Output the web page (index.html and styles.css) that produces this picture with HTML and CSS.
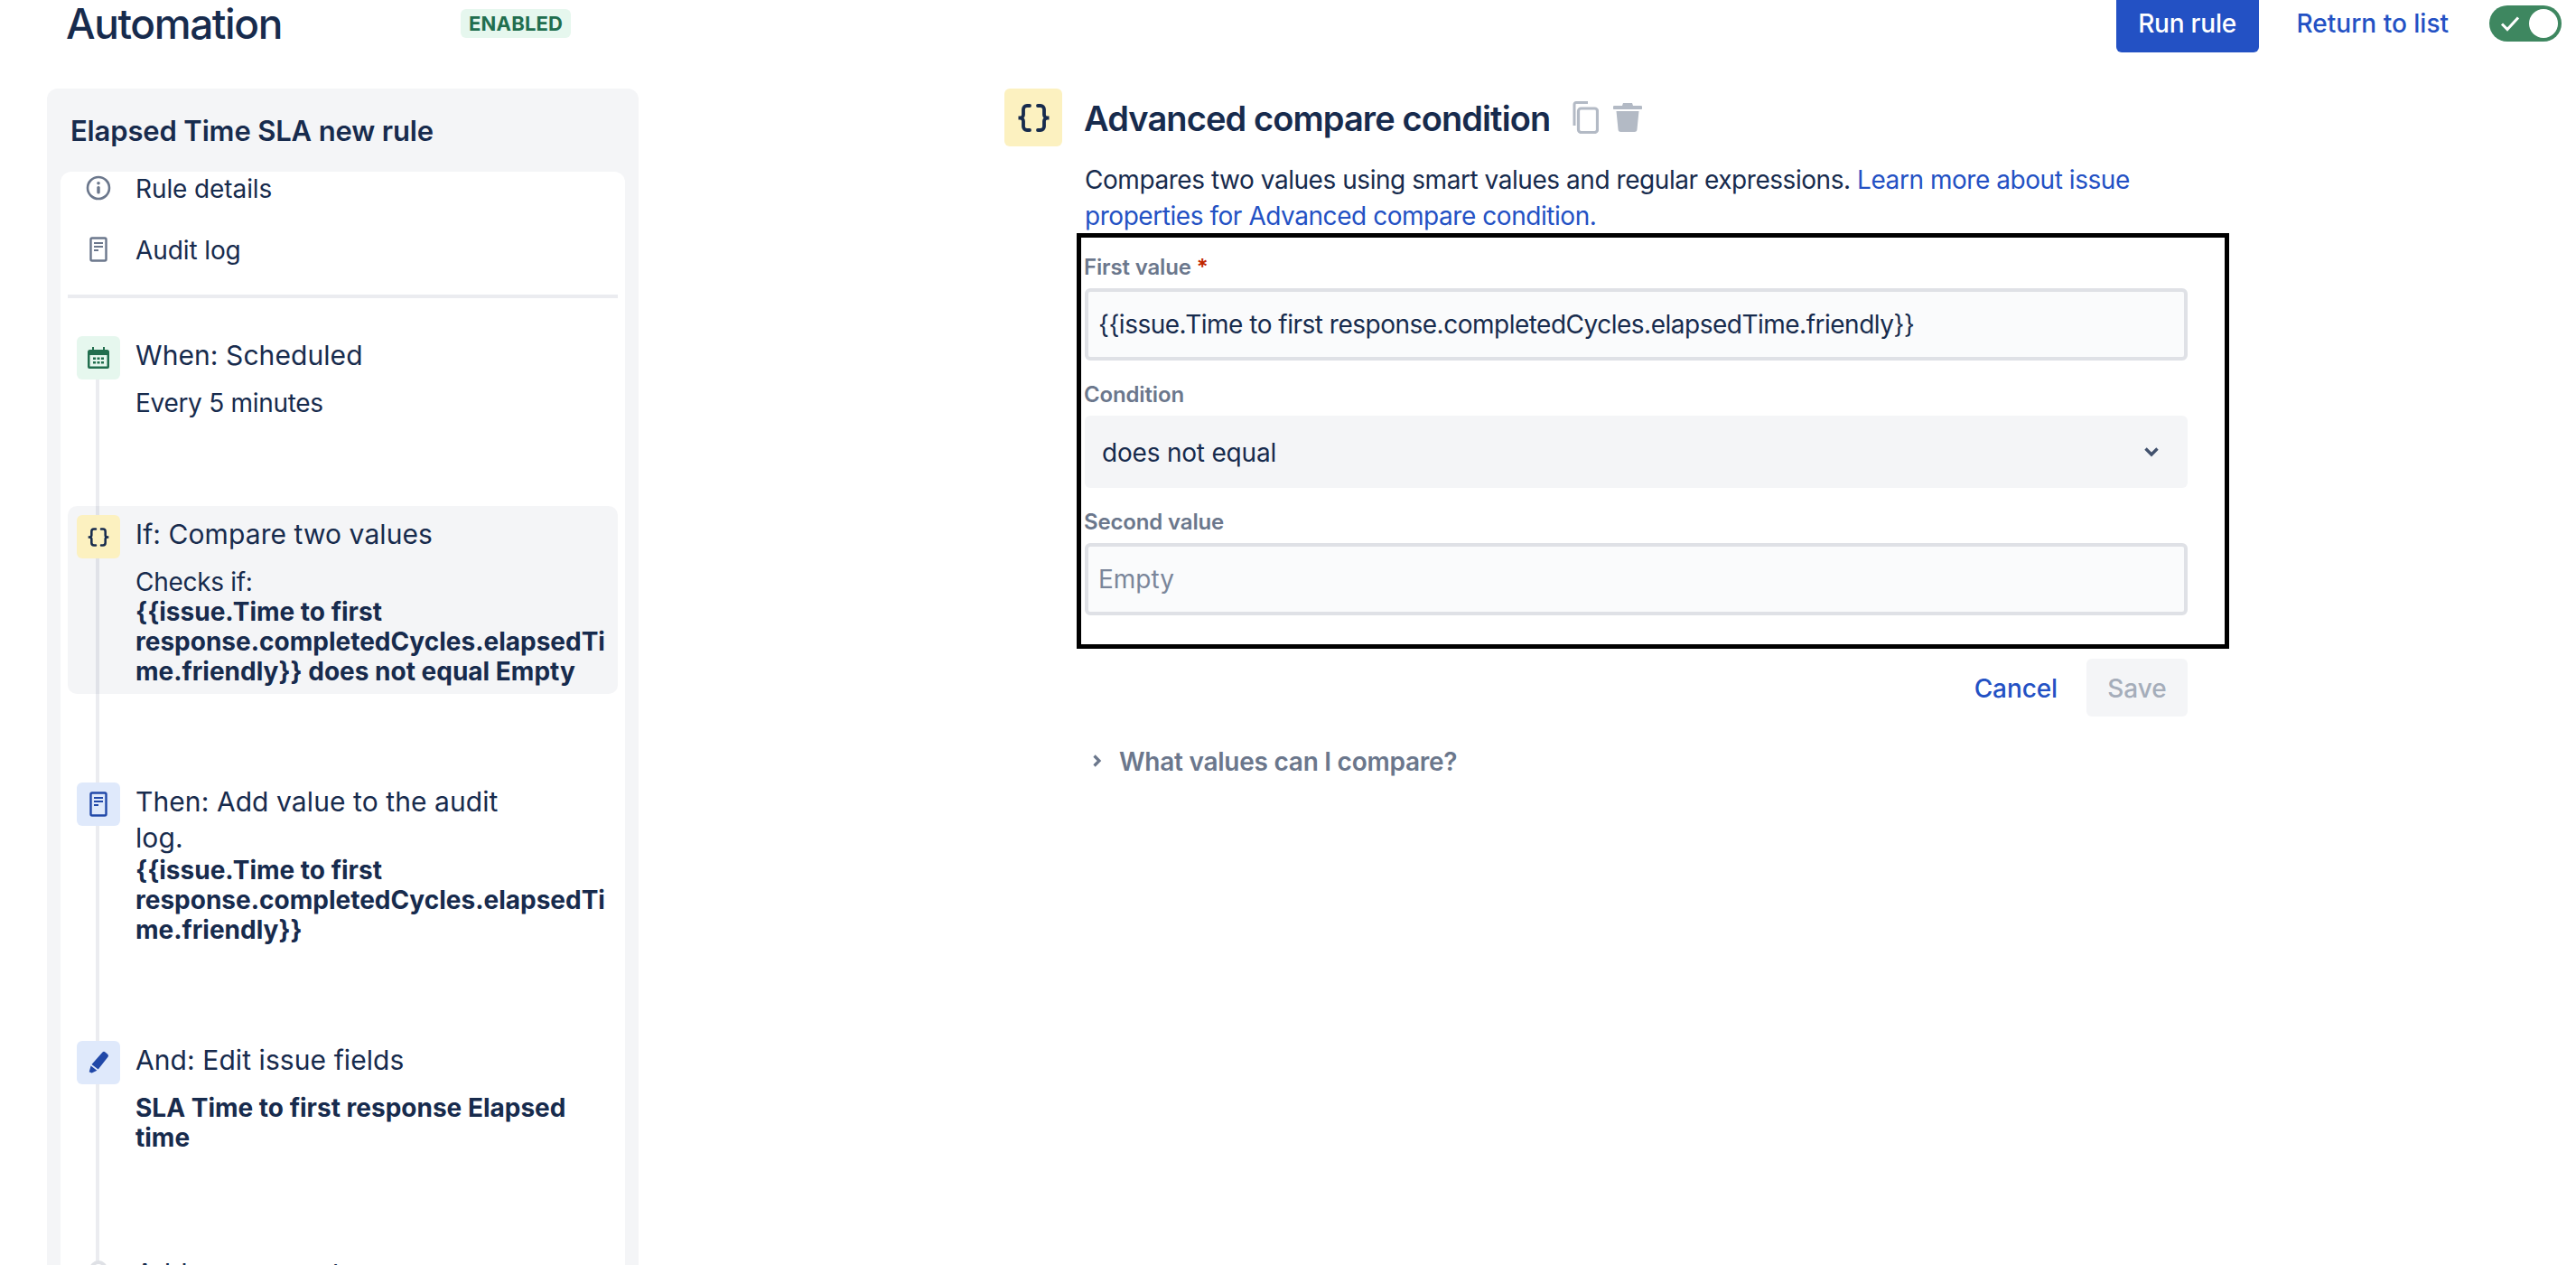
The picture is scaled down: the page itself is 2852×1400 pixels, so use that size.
FILE: index.html
```html
<!DOCTYPE html>
<html lang="en">
<head>
<meta charset="utf-8">
<title>Automation</title>
<link rel="stylesheet" href="styles.css">
</head>
<body>
<svg class="defs" width="0" height="0" aria-hidden="true">
  <defs>
    <symbol id="braces" viewBox="0 0 39 31">
      <path d="M15 2h-3a4 4 0 0 0-4 4v6a3.500 3.500 0 0 1-3.500 3.500H2.500h2a3.500 3.500 0 0 1 3.500 3.500v6a4 4 0 0 0 4 4h3M24 2h3a4 4 0 0 1 4 4v6a3.500 3.500 0 0 0 3.500 3.500h2h-2a3.500 3.500 0 0 0-3.500 3.500v6a4 4 0 0 1-4 4h-3" fill="none" stroke="currentColor" stroke-width="3.800" stroke-linecap="round"/>
    </symbol>
    <symbol id="doc" viewBox="0 0 20 28">
      <rect x="1.500" y="1.500" width="17" height="25" rx="1.500" fill="none" stroke="currentColor" stroke-width="2.400"/>
      <path d="M5 6h10v2H5zM5 10h10v2H5zM5 14h5v2H5z" fill="currentColor"/>
    </symbol>
  </defs>
</svg>
<header class="topbar">
  <h1 class="page-title">Automation</h1>
  <span class="badge">ENABLED</span>
  <button class="btn-primary">Run rule</button>
  <a class="return-link">Return to list</a>
  <span class="toggle">
    <svg class="toggle-check" viewBox="0 0 22 18" width="22" height="18"><path d="M2 9.500l6 6L20 2.500" fill="none" stroke="#fff" stroke-width="3"/></svg>
    <span class="toggle-knob"></span>
  </span>
</header>
<main class="layout">
  <aside class="panel">
    <h2 class="panel-title">Elapsed Time SLA new rule</h2>
    <div class="card">
      <div class="nav-row">
        <span class="nav-icon">
          <svg viewBox="0 0 28 28" width="28" height="28"><circle cx="14" cy="14" r="12" fill="none" stroke="#6B778C" stroke-width="2.600"/><circle cx="14" cy="8.800" r="1.800" fill="#6B778C"/><rect x="12.300" y="12" width="3.400" height="8.500" rx="1.500" fill="#6B778C"/></svg>
        </span>
        <span class="nav-label">Rule details</span>
      </div>
      <div class="nav-row">
        <span class="nav-icon nav-doc"><svg width="20" height="28"><use href="#doc"/></svg></span>
        <span class="nav-label">Audit log</span>
      </div>
      <div class="divider"></div>
      <div class="timeline">
        <section class="step">
          <span class="step-icon icon-green">
            <svg viewBox="0 0 26 26" width="26" height="26"><path fill="#216E4E" fill-rule="evenodd" d="M6 1h2v3h10V1h2v3h2.500A2.500 2.500 0 0 1 25 6.500V23a2 2 0 0 1-2 2H3a2 2 0 0 1-2-2V6.500A2.500 2.500 0 0 1 3.500 4H6zM3.500 10v12.500h19V10zM7 12.500h3v2.500H7zm4.500 0h3v2.500h-3zm4.500 0h3v2.500h-3zM7 17h3v2.500H7zm4.500 0h3v2.500h-3zm4.500 0h3v2.500h-3z"/></svg>
          </span>
          <div class="step-body">
            <div class="step-title">When: Scheduled</div>
            <div class="step-sub">Every 5 minutes</div>
          </div>
        </section>
        <section class="step step-active">
          <span class="step-icon icon-yellow"><svg width="26" height="21"><use href="#braces"/></svg></span>
          <div class="step-body">
            <div class="step-title">If: Compare two values</div>
            <div class="step-sub">Checks if:<br><strong>{{issue.Time to first response.completedCycles.elapsedTime.friendly}} does not equal Empty</strong></div>
          </div>
        </section>
        <section class="step">
          <span class="step-icon icon-blue"><svg width="20" height="28"><use href="#doc"/></svg></span>
          <div class="step-body">
            <div class="step-title">Then: Add value to the audit log.</div>
            <div class="step-sub step-sub-tight"><strong>{{issue.Time to first response.completedCycles.elapsedTime.friendly}}</strong></div>
          </div>
        </section>
        <section class="step">
          <span class="step-icon icon-blue">
            <svg viewBox="0 0 26 26" width="26" height="26"><path fill="#2148A8" d="M17.500 1.500a2.200 2.200 0 0 1 3 0l2.700 2.300a2.200 2.200 0 0 1 .3 3L12.700 20.500 5.500 15zM4.600 16.500l6.800 5.200-5.800 2.800-2.900-1.200z"/></svg>
          </span>
          <div class="step-body">
            <div class="step-title">And: Edit issue fields</div>
            <div class="step-sub"><strong>SLA Time to first response Elapsed time</strong></div>
          </div>
        </section>
        <section class="step step-add">
          <span class="add-ring"></span>
          <div class="step-title">Add component</div>
        </section>
      </div>
    </div>
  </aside>
  <section class="editor">
    <div class="editor-head">
      <span class="editor-icon"><svg width="39" height="31"><use href="#braces"/></svg></span>
      <h2 class="editor-title">Advanced compare condition</h2>
      <svg class="head-action" viewBox="0 0 30 36" width="30" height="36"><path d="M3 27V3.500A2 2 0 0 1 5 1.500h13" fill="none" stroke="#B3BAC5" stroke-width="3"/><rect x="7.500" y="8" width="21" height="26.500" rx="3" fill="none" stroke="#B3BAC5" stroke-width="3.200"/></svg>
      <svg class="head-action" viewBox="0 0 32 32" width="32" height="32"><path fill="#B3BAC5" d="M11 0h10l1 3h8.500a1.500 1.500 0 0 1 0 4h-29a1.500 1.500 0 0 1 0-4H10zM3.500 9h25l-2 20a3 3 0 0 1-3 3h-15a3 3 0 0 1-3-3z"/></svg>
    </div>
    <p class="editor-desc">Compares two values using smart values and regular expressions. <a class="link">Learn more about issue properties for Advanced compare condition.</a></p>
    <div class="outlined">
      <div class="field">
        <div class="field-label">First value<span class="req">*</span></div>
        <div class="input input-long">{{issue.Time to first response.completedCycles.elapsedTime.friendly}}</div>
      </div>
      <div class="field">
        <div class="field-label">Condition</div>
        <div class="select">
          <span class="select-value">does not equal</span>
          <svg viewBox="0 0 18 14" width="18" height="14"><path d="M2.500 3.500L9 10l6.500-6.500" fill="none" stroke="#42526E" stroke-width="3.400"/></svg>
        </div>
      </div>
      <div class="field">
        <div class="field-label">Second value</div>
        <div class="input input-empty">Empty</div>
      </div>
    </div>
    <div class="actions">
      <a class="link cancel">Cancel</a>
      <button class="btn-save">Save</button>
    </div>
    <div class="expander">
      <svg viewBox="0 0 24 24" width="24" height="24"><path d="M9.500 6.500L15 12l-5.500 5.500" fill="none" stroke="#6B778C" stroke-width="3.200"/></svg>
      <span class="expander-label">What values can I compare?</span>
    </div>
  </section>
</main>
</body>
</html>
```
FILE: styles.css
```css
* { box-sizing: border-box; }
html, body { margin: 0; height: 1400px; overflow: hidden; background: #fff; }
body { font-family: Inter, "Noto Sans", sans-serif; font-size: 28px; line-height: 40px; color: #172B4D; }
.defs { display: block; height: 0; }

.topbar { display: flex; align-items: center; height: 52px; padding-left: 73px; padding-right: 16px; }
.page-title { margin: 0; font-size: 46px; font-weight: 500; line-height: 52px; width: 437px; letter-spacing: -1.4px; }
.badge { display: flex; align-items: center; height: 32px; padding: 0 9px; border-radius: 6px; background: #E6F7EE; color: #216E4E; font-size: 22px; font-weight: 700; letter-spacing: .2px; }
.btn-primary { margin-left: auto; width: 158px; height: 64px; border: 0; border-radius: 6px; background: #2351C4; color: #fff; font: 500 28px Inter, sans-serif; letter-spacing: -.2px; }
.return-link { margin-left: 42px; color: #2351C4; font-weight: 500; }
.toggle { display: flex; align-items: center; justify-content: space-between; margin-left: 45px; width: 80px; height: 40px; padding: 0 4px 0 12px; border-radius: 20px; background: #3E8760; }
.toggle-knob { width: 32px; height: 32px; border-radius: 50%; background: #fff; }

.layout { display: flex; align-items: flex-start; margin-top: 46px; }
.panel { width: 655px; height: 1302px; margin-left: 52px; border-radius: 12px 12px 0 0; background: #F4F5F7; padding: 0 15px; }
.panel-title { margin: 0 0 0 11px; height: 92px; font-size: 31px; font-weight: 600; line-height: 94px; letter-spacing: -.15px; }
.card { height: 1210px; overflow: hidden; border-radius: 12px 12px 0 0; background: #fff; padding: 0 8px; }

.nav-row { display: flex; align-items: center; height: 36px; margin-bottom: 32px; }
.nav-icon { display: flex; justify-content: center; width: 48px; margin: 0 16px 0 10px; }
.nav-label { padding-top: 2px; margin-left: 1px; letter-spacing: -.1px; }
.nav-doc { color: #6B778C; }
.divider { height: 4px; background: #EBECF0; }

.timeline { position: relative; padding-top: 32px; }
.timeline::before { content: ""; position: absolute; left: 31px; top: 70px; bottom: 0; width: 4px; background: #EBECF0; }
.step { position: relative; display: flex; gap: 17px; padding: 10px 10px 8px; margin-bottom: 88px; border-radius: 10px; }
.step:first-child { margin-bottom: 89px; }
.step-active { background: rgba(9, 30, 66, .045); }
.step-icon { position: relative; flex: none; display: flex; align-items: center; justify-content: center; width: 48px; height: 48px; border-radius: 6px; }
.icon-green { background: #E6F7EE; }
.icon-yellow { background: #FCF1C0; color: #172B4D; }
.icon-blue { background: #DFE9FB; color: #2148A8; }
.step-body { width: 522px; }
.step-title { max-width: 440px; margin-top: 1px; font-size: 30px; letter-spacing: .08px; }
.step-sub { margin-top: 17px; line-height: 33px; overflow-wrap: anywhere; letter-spacing: -.3px; }
.step-sub-tight { margin-top: 0; }
strong { font-weight: 700; letter-spacing: 0; }
.step-add { padding-top: 16px; margin-bottom: 0; }
.add-ring { position: relative; flex: none; width: 20px; height: 20px; margin: 7px 14px 0 14px; border: 4px solid #DFE1E6; border-radius: 50%; background: #fff; }

.editor { width: 1356px; margin-left: 405px; }
.editor-head { display: flex; align-items: center; height: 64px; }
.editor-icon { display: flex; align-items: center; justify-content: center; width: 64px; height: 64px; border-radius: 6px; background: #FCF1C0; color: #172B4D; margin-right: 24px; }
.editor-title { margin: 2px 24px 0 0; font-size: 38px; font-weight: 600; line-height: 48px; letter-spacing: -.9px; }
.head-action { margin-right: 16px; }
.editor-desc { margin: 16px 0 0 89px; width: 1221px; height: 80px; padding-top: 1px; letter-spacing: -.45px; }
.link { color: #2351C4; }
.outlined { margin-left: 80px; width: 1276px; padding: 18px 41px 32px 4px; border: 5px solid #000; }
.field + .field { margin-top: 23px; }
.field-label { margin: 0 0 8px -1px; font-size: 24px; font-weight: 600; line-height: 30px; color: #6B778C; letter-spacing: -.15px; }
.req { margin-left: 6px; color: #BF2600; }
.input { height: 80px; padding: 0 12px 0 11px; border: 4px solid #DFE1E6; border-radius: 6px; background: #FAFBFC; line-height: 72px; }
.input-long { letter-spacing: -.5px; }
.input-empty { color: #7A869A; }
.select { display: flex; align-items: center; justify-content: space-between; height: 80px; padding: 0 31px 0 19px; border-radius: 6px; background: #F4F5F7; }
.select-value { padding-top: 2px; letter-spacing: -.2px; }
.actions { display: flex; align-items: center; justify-content: flex-end; gap: 32px; width: 1221px; margin: 11px 0 0 89px; }
.cancel { font-weight: 500; padding-top: 2px; letter-spacing: -.1px; }
.btn-save { width: 112px; height: 64px; border: 0; padding-top: 3px; border-radius: 6px; background: #F4F5F7; color: #A5ADBA; font: 500 28px Inter, sans-serif; }
.expander { display: flex; align-items: center; gap: 13px; margin: 28px 0 0 90px; color: #6B778C; font-weight: 600; }
.expander-label { padding-top: 2px; letter-spacing: -.25px; }
```
